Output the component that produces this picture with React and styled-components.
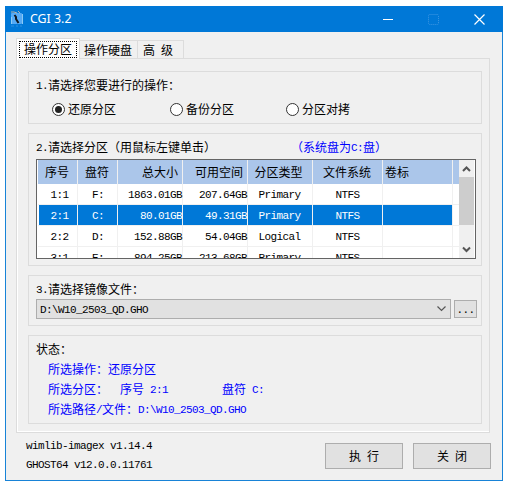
import React from "react";
import styled, { createGlobalStyle } from "styled-components";

const Global = createGlobalStyle`
  *{box-sizing:border-box}
  body{margin:0;background:#fff;overflow:hidden}
  button{font:inherit;color:inherit;padding:0;margin:0;border-radius:0}
`;

const Window = styled.main`
  width:498px;height:475px;margin:6px 0 0 5px;
  display:flex;flex-direction:column;
  background:#f0f0f0;border:1px solid #1883d7;border-top:0;
  font:12px/16px "Noto Sans CJK SC",sans-serif;color:#000;
  white-space:pre;cursor:default;
`;
const TitleBar = styled.header`
  height:26px;margin:0 -1px;padding-left:5px;flex:none;
  display:flex;align-items:center;background:#0078d7;
`;
const Title = styled.h1`
  flex:1;margin:0 0 0 6px;font:12.4px/20px "Noto Sans",sans-serif;color:#fff;
`;
const CaptionButton = styled.button`
  width:${p => p.$w || 46}px;height:26px;border:0;background:none;
  display:flex;align-items:center;justify-content:center;
`;
const Latin = styled.span`
  font-family:"Liberation Mono",monospace;font-size:11px;letter-spacing:-0.6px;
  line-height:0;vertical-align:1px;
`;
const Tabs = styled.nav`
  display:flex;align-items:flex-end;height:27px;padding-left:11px;margin-bottom:-1px;flex:none;
`;
const Tab = styled.div`
  width:${p => p.$w}px;height:19px;padding:1px 0 0 ${p => p.$l || 4}px;
  border:1px solid #dcdcdc;border-left:0;
`;
const ActiveTab = styled.div`
  width:64px;height:21px;padding:2px 2px 0 2px;margin-left:-1px;
  border:1px solid #dcdcdc;border-bottom:0;background:#fff;
  z-index:1;
`;
const Focus = styled.div`
  height:17px;border:1px dotted #000;padding-left:4px;line-height:14px;
`;
const Pane = styled.section`
  width:474px;height:375px;margin-left:10px;padding:12px 7px 0 11px;flex:none;
  border:1px solid #dcdcdc;box-shadow:inset 1px -1px #fff;
`;
const Group = styled.section`
  width:454px;height:${p => p.$h}px;margin-bottom:${p => p.$gap || 0}px;
  border:1px solid #dcdcdc;padding:5px 4px 0 7px;
`;
const Heading = styled.div`
  height:${p => p.$h || 16}px;line-height:16px;
`;
const Note = styled.span`display:inline-block;color:#00f;margin-left:75px;`;
const Radios = styled.div`display:flex;padding-left:16px;margin-top:8px;`;
const Radio = styled.label`
  width:${p => p.$w}px;display:flex;align-items:center;gap:3px;
`;
const Dot = styled.span`
  width:13px;height:13px;border:1px solid #333;border-radius:50%;background:#fff;
  display:grid;place-items:center;
  &::after{content:"";width:7px;height:7px;border-radius:50%;background:${p => p.$on ? "#222" : "#fff"}}
`;
const List = styled.div`
  width:440px;height:100px;border:1px solid #646464;background:#fff;
  display:flex;overflow:hidden;
`;
const Grid = styled.div`width:422px;flex:none;overflow:hidden;`;
const Row = styled.div`
  display:grid;grid-template-columns:40px 40px 65px 65px 65px 70px 70px 6px;
  height:${p => p.$head ? 24 : 21}px;margin-left:1px;
  background:${p => p.$head ? "#abc6ea" : "#fff"};color:${p => p.$sel ? "#fff" : "#000"};
`;
const Cell = styled.div`
  border-right:1px solid #f0f0f0;
  border-bottom:${p => p.$head ? 0 : 1}px solid #f0f0f0;
  padding:0 ${p => p.$r || 0}px 0 ${p => p.$l || 0}px;
  text-align:${p => p.$a};line-height:${p => p.$head ? 24 : 20}px;
  background:${p => p.$sel ? "#0078d7" : "transparent"};
  &:first-child{${p => p.$sel ? "box-shadow:inset 1px 0 #fff;" : ""}}
  &:last-child{border-right:0;background:transparent}
`;
const Scroll = styled.div`
  width:15px;background:#f0f0f0;display:flex;flex-direction:column;align-items:center;
`;
const Arrow = styled.svg`display:block;flex:none;`;
const Thumb = styled.div`width:15px;height:48px;background:#cdcdcd;margin-bottom:auto;`;
const PickRow = styled.div`display:flex;align-items:center;gap:3px;`;
const Combo = styled.div`
  width:415px;height:20px;border:1px solid #adadad;background:#e1e1e1;
  display:flex;align-items:center;justify-content:space-between;padding:0 4px 0 3px;
`;
const Button = styled.button`
  width:${p => p.$w}px;height:${p => p.$h}px;border:1px solid #adadad;background:#e1e1e1;
  display:flex;align-items:center;justify-content:center;
`;
const Status = styled.div`
  height:20px;line-height:20px;padding-left:12px;color:#00f;
`;
const Drive = styled.span`margin-left:54px;`;
const Footer = styled.footer`
  display:flex;padding:10px 11px 0 20px;gap:10px;
`;
const Versions = styled.div`
  flex:1;line-height:19px;margin-top:-8px;
`;

// Half-width runs use the monospace face, tightened to a 6px advance.
const T = ({ children }) =>
  children.split(/([\x20-\x7e]+)/).map((s, i) => (i % 2 ? <Latin key={i}>{s}</Latin> : s));

const columns = [
  { name: "序号", a: "center", hr: 1, l: 4 },
  { name: "盘符", a: "center", hr: 1, l: 1 },
  { name: "总大小", a: "right", hr: 4 },
  { name: "可用空间", a: "right", hr: 4 },
  { name: "分区类型", a: "center", hr: 3, r: 1 },
  { name: "文件系统", a: "center", hr: 1 },
  { name: "卷标", a: "left", hl: 2 },
  { name: "", a: "left" },
];
const rows = [
  ["1:1", "F:", "1863.01GB", "207.64GB", "Primary", "NTFS", "", ""],
  ["2:1", "C:", "80.01GB", "49.31GB", "Primary", "NTFS", "", ""],
  ["2:2", "D:", "152.88GB", "54.04GB", "Logical", "NTFS", "", ""],
  ["3:1", "E:", "894.25GB", "213.68GB", "Primary", "NTFS", "", ""],
];

const AppIcon = () => (
  <svg width="14" height="18" viewBox="0 0 14 18">
    <rect x="1" y="3" width="11" height="11" rx="1" fill="#55aaf5" />
    <path d="M1.500 14V7M12.500 14V4" stroke="#8bc9f5" fill="none" />
    <path d="M1 2h3l3 1M8 1l2 2" stroke="#b9b2a8" fill="none" />
    <path d="M4.500 5l1.500 2v2l2.500 4" stroke="#101820" strokeWidth="2" fill="none" />
    <path d="M1 16h3M6 16h2M10 16h2" stroke="#2f8fe0" />
  </svg>
);

export default function App() {
  return (
    <>
      <Global />
      <Window>
        <TitleBar>
          <AppIcon />
          <Title>CGI 3.2</Title>
          <CaptionButton>
            <svg width="10" height="10"><path d="M0 5.5h10" stroke="#fff" /></svg>
          </CaptionButton>
          <CaptionButton $w={44}>
            <svg width="11" height="11"><rect x=".5" y=".5" width="10" height="10" rx="1" fill="none" stroke="#3c96e2" strokeDasharray="1 1" /></svg>
          </CaptionButton>
          <CaptionButton $w={48}>
            <svg width="11" height="11"><path d="M.5.5l10 10M10.5.5l-10 10" stroke="#fff" strokeWidth="1.2" /></svg>
          </CaptionButton>
        </TitleBar>
        <Tabs>
          <ActiveTab><Focus>操作分区</Focus></ActiveTab>
          <Tab $w={58}>操作硬盘</Tab>
          <Tab $w={46} $l={5}><T>高 级</T></Tab>
        </Tabs>
        <Pane>
          <Group $h={53} $gap={9}>
            <Heading><T>1.请选择您要进行的操作：</T></Heading>
            <Radios>
              <Radio $w={118}><Dot $on />还原分区</Radio>
              <Radio $w={116}><Dot />备份分区</Radio>
              <Radio><Dot />分区对拷</Radio>
            </Radios>
          </Group>
          <Group $h={133} $gap={9}>
            <Heading $h={20}>
              <T>2.请选择分区（用鼠标左键单击）</T>
              <Note><T>（系统盘为C:盘）</T></Note>
            </Heading>
            <List>
              <Grid>
                <Row $head>
                  {columns.map((c, i) => (
                    <Cell key={i} $head $a={c.a} $r={c.hr} $l={c.hl}>{c.name}</Cell>
                  ))}
                </Row>
                {rows.map((row, n) => (
                  <Row key={n} $sel={n === 1}>
                    {row.map((v, i) => (
                      <Cell key={i} $a={columns[i].a} $r={columns[i].r} $l={columns[i].l} $sel={n === 1}><T>{v}</T></Cell>
                    ))}
                  </Row>
                ))}
              </Grid>
              <Scroll>
                <Arrow width="15" height="17"><path d="M4 11l3.5-3.5L11 11" fill="none" stroke="#555" strokeWidth="2" /></Arrow>
                <Thumb />
                <Arrow width="15" height="17"><path d="M4 6.5L7.5 10 11 6.5" fill="none" stroke="#555" strokeWidth="2" /></Arrow>
              </Scroll>
            </List>
          </Group>
          <Group $h={51} $gap={9}>
            <Heading $h={18}><T>3.请选择镜像文件：</T></Heading>
            <PickRow>
              <Combo>
                <span><T>{"D:\\W10_2503_QD.GHO"}</T></span>
                <svg width="9" height="6"><path d="M.5 .5l4 4 4-4" fill="none" stroke="#555" strokeWidth="1.2" /></svg>
              </Combo>
              <Button $w={23} $h={18}><span><T>...</T></span></Button>
            </PickRow>
          </Group>
          <Group $h={89}>
            <Heading $h={18}>状态：</Heading>
            <Status>所选操作：还原分区</Status>
            <Status>
              <T>所选分区：  序号 2:1</T>
              <Drive><T>盘符 C:</T></Drive>
            </Status>
            <Status><T>{"所选路径/文件：D:\\W10_2503_QD.GHO"}</T></Status>
          </Group>
        </Pane>
        <Footer>
          <Versions>
            <div><T>wimlib-imagex v1.14.4</T></div>
            <div><T>GHOST64 v12.0.0.11761</T></div>
          </Versions>
          <Button $w={78} $h={26}><span><T>执 行</T></span></Button>
          <Button $w={78} $h={26}><span><T>关 闭</T></span></Button>
        </Footer>
      </Window>
    </>
  );
}
